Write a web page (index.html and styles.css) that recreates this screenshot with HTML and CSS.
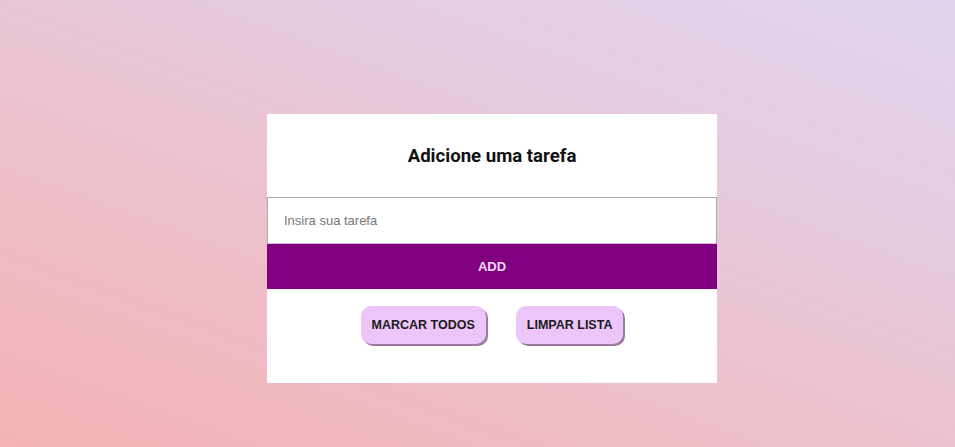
FILE: index.html
```html
<!DOCTYPE html>
<html lang="pt-BR">
<head>
<meta charset="utf-8">
<title>Lista de tarefas</title>
<link rel="stylesheet" href="styles.css">
</head>
<body>
<main class="page">
  <section class="card">
    <h1 class="title">Adicione uma tarefa</h1>
    <input class="task-input" type="text" placeholder="Insira sua tarefa">
    <button class="add-btn">ADD</button>
    <div class="actions">
      <button class="pill-btn">MARCAR TODOS</button>
      <button class="pill-btn">LIMPAR LISTA</button>
    </div>
  </section>
</main>
</body>
</html>
```
FILE: styles.css
```css
html, body {
  margin: 0;
  padding: 0;
  height: 100%;
}
body {
  background: linear-gradient(20deg, #f4b3b5 0%, #ecc0cb 40%, #e6cbe0 70%, #e0d4ee 100%);
  font-family: "Liberation Sans", Arial, sans-serif;
  overflow: hidden;
}
.page {
  height: 447px;
  display: flex;
  justify-content: center;
  align-items: flex-start;
  padding-top: 114px;
  padding-left: 29px;
  box-sizing: border-box;
}
.card {
  width: 450px;
  height: 269px;
  background: #ffffff;
  display: flex;
  flex-direction: column;
}
.title {
  margin: 0;
  height: 83px;
  display: flex;
  align-items: center;
  justify-content: center;
  font-family: Roboto, "Liberation Sans", sans-serif;
  font-weight: 700;
  font-size: 18.6px;
  color: #111;
  box-sizing: border-box;
}
.task-input {
  height: 47px;
  margin: 0;
  border: 1px solid #a9a9a9;
  border-bottom-color: #d9b4d9;
  padding: 0 16px;
  box-sizing: border-box;
  font-family: "Liberation Sans", Arial, sans-serif;
  font-size: 13px;
  outline: none;
  width: 100%;
}
.task-input::placeholder {
  color: #777;
}
.add-btn {
  height: 45px;
  border: none;
  margin: 0;
  background: #800080;
  color: #f6dcf6;
  font-family: "Liberation Sans", Arial, sans-serif;
  font-weight: 700;
  font-size: 13px;
  cursor: pointer;
  width: 100%;
}
.actions {
  display: flex;
  justify-content: center;
  gap: 30px;
  padding-top: 17px;
}
.pill-btn {
  height: 38px;
  padding: 0 11px;
  border: none;
  border-radius: 10px;
  background: #ecc6fa;
  box-shadow: 2px 2px 0 #9b7b9f;
  color: #1a1a1a;
  font-family: "Liberation Sans", Arial, sans-serif;
  font-weight: 700;
  font-size: 12.5px;
  cursor: pointer;
}
```
